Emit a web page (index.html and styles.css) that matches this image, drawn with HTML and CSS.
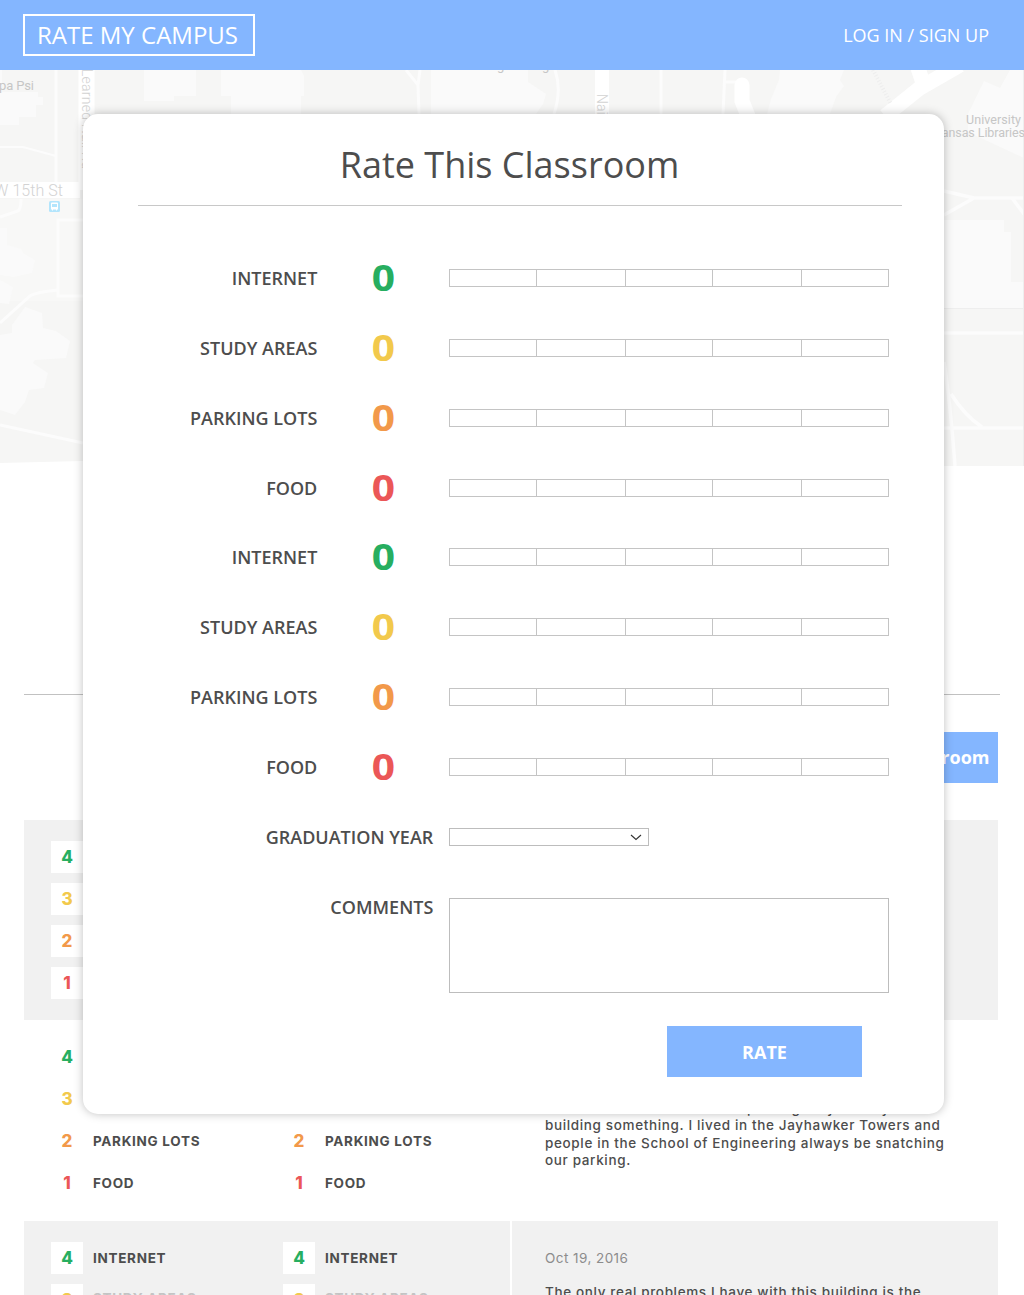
FILE: index.html
```html
<!DOCTYPE html>
<html lang="en">
<head>
<meta charset="utf-8">
<title>Rate My Campus</title>
<link rel="stylesheet" href="styles.css">
</head>
<body>
<header class="topbar">
  <a class="logo">RATE MY CAMPUS</a>
  <a class="login">LOG IN / SIGN UP</a>
</header>

<main class="page">
  <svg class="map" viewBox="0 70 1024 396" width="1024" height="396">
    <path class="ground" d="M0 70H1024V466H900V461H83L0 463Z"/>
    <g class="lawn">
      <path d="M0 199H83V301H0Z" opacity=".5"/>
      <path d="M0 70H2V92H38V97H43V105H36V117H19V125H0Z"/>
      <path d="M144 70H196V96H174V101H144ZM221 70H301L304 76V96H301V114H231V96H221Z"/>
      <path d="M431 70H528V82L546 94L543 104L536 114H431Z"/>
      <path d="M0 228H7V245L21 249L23 253L35 260L32 273L14 277L0 275ZM0 280L13 287L9 304L0 303ZM25 307L42 313L43 328L56 331L70 341L66 358L35 360L33 363L48 373L44 388L29 390L25 402L15 415L0 410V335L12 333L12 325Z"/>
      <path d="M780 70H844L840 80L844 86L836 97L830 114H767L771 99L779 80Z"/>
      <path d="M968 114L984 81L1000 88L1010 70H1024V158L968 132Z"/>
      <path d="M944 220H1004V232H1011V282H1024V308H944Z"/>
    </g>
    <g class="road">
      <path d="M56 70V182M0 217L18 211Q21 209 21 199M83 220H58V296H83M0 323L30 296Q36 292 59 290M0 425L83 443" />
      <path d="M0 147H23L56 156" stroke-width="2"/>
      <path d="M406 70L418 85L419 114M420 70L418 85M555 70Q562 90 554 114M661 70V114M725 70L723 114M726 82H738" stroke-width="3"/>
      <path d="M944 191L974 198H1024M944 215L974 198M1012 198L1024 214M944 333H1024M944 428H1024M944 362Q950 400 955 466M951 394Q965 416 982 427" stroke-width="3.5"/>
    </g>
    <path class="street" d="M0 190H80M86.500 70V190" stroke-width="16"/>
    <path class="street" d="M602 70V120" stroke-width="14"/>
    <path class="street" d="M742 85V101L748 116" stroke-width="15" stroke-linecap="round"/>
    <path class="street" d="M916 62L924 86M885 116L920 88L960 65" stroke-width="15"/>
    <path class="steps" d="M873 70L891 104"/>
    <path class="edge" d="M1023.500 70V466M944 308.500H1024"/>
    <g class="maptext">
      <text x="-1" y="89.500" font-size="13" textLength="35">pa Psi</text>
      <text x="-6" y="196" font-size="16" class="pale" textLength="69">W 15th St</text>
      <text transform="translate(81.500 69) rotate(90)" font-size="14" class="pale" textLength="100">Learned Hall Rd</text>
      <text transform="translate(597 94) rotate(90)" font-size="14" class="pale">Nai</text>
      <text x="966" y="123.500" font-size="12.500" textLength="55">University</text>
      <text x="934" y="136.500" font-size="12.500" textLength="91">Kansas Libraries</text>
      <text x="497" y="70" font-size="13">g</text>
      <text x="542" y="70" font-size="13">g</text>
    </g>
    <g class="bus">
      <rect x="49" y="201" width="11" height="11" rx="1.500"/>
      <path d="M51 203.500Q51 202.500 52 202.500H57Q58 202.500 58 203.500V209.500H57V210.500H56V209.500H53V210.500H52V209.500H51Z" fill="#fff"/>
      <path d="M52 204H57V207H52Z"/>
    </g>
  </svg>

  <hr class="rule">
  <a class="rate-link">Rate Classroom</a>

  <section class="reviews">
    <article class="review shaded">
      <div class="scores">
        <ul class="score-col">
          <li><b class="num green">4</b></li>
          <li><b class="num yellow">3</b></li>
          <li><b class="num orange">2</b></li>
          <li><b class="num red">1</b></li>
        </ul>
      </div>
      <div class="note"></div>
    </article>
    <article class="review">
      <div class="scores">
        <ul class="score-col">
          <li><b class="num green">4</b></li>
          <li><b class="num yellow">3</b></li>
          <li><b class="num orange">2</b><span>PARKING LOTS</span></li>
          <li><b class="num red">1</b><span>FOOD</span></li>
        </ul>
        <ul class="score-col">
          <li></li>
          <li></li>
          <li><b class="num orange">2</b><span>PARKING LOTS</span></li>
          <li><b class="num red">1</b><span>FOOD</span></li>
        </ul>
      </div>
      <div class="note">
        <p class="comment late"><span class="first">parking they usually</span><br>building something. I lived in the Jayhawker Towers and<br>people in the School of Engineering always be snatching<br>our parking.</p>
      </div>
    </article>
    <article class="review shaded">
      <div class="scores">
        <ul class="score-col">
          <li><b class="num green">4</b><span>INTERNET</span></li>
          <li><b class="num yellow">3</b><span class="faint">STUDY AREAS</span></li>
        </ul>
        <ul class="score-col">
          <li><b class="num green">4</b><span>INTERNET</span></li>
          <li><b class="num yellow">3</b><span class="faint">STUDY AREAS</span></li>
        </ul>
      </div>
      <div class="note">
        <time class="date">Oct 19, 2016</time>
        <p class="comment">The only real problems I have with this building is the</p>
      </div>
    </article>
  </section>
</main>

<form class="modal">
  <h1 class="title">Rate This Classroom</h1>
  <div class="field"><label>INTERNET</label><b class="value green">0</b><div class="bar"><i></i><i></i><i></i><i></i><i></i></div></div>
  <div class="field"><label>STUDY AREAS</label><b class="value yellow">0</b><div class="bar"><i></i><i></i><i></i><i></i><i></i></div></div>
  <div class="field"><label>PARKING LOTS</label><b class="value orange">0</b><div class="bar"><i></i><i></i><i></i><i></i><i></i></div></div>
  <div class="field"><label>FOOD</label><b class="value red">0</b><div class="bar"><i></i><i></i><i></i><i></i><i></i></div></div>
  <div class="field"><label>INTERNET</label><b class="value green">0</b><div class="bar"><i></i><i></i><i></i><i></i><i></i></div></div>
  <div class="field"><label>STUDY AREAS</label><b class="value yellow">0</b><div class="bar"><i></i><i></i><i></i><i></i><i></i></div></div>
  <div class="field"><label>PARKING LOTS</label><b class="value orange">0</b><div class="bar"><i></i><i></i><i></i><i></i><i></i></div></div>
  <div class="field"><label>FOOD</label><b class="value red">0</b><div class="bar"><i></i><i></i><i></i><i></i><i></i></div></div>
  <div class="field wide"><label>GRADUATION YEAR</label><div class="select"><svg width="12" height="8" viewBox="0 0 12 8"><path d="M1 2L6 6.500L11 2" fill="none" stroke="#333" stroke-width="1.100"/></svg></div></div>
  <div class="field wide comments"><label>COMMENTS</label><div class="area"></div></div>
  <button class="submit" type="button">RATE</button>
</form>
</body>
</html>
```
FILE: styles.css
```css
* { box-sizing: border-box; margin: 0; padding: 0; }
body {
  position: relative;
  width: 1024px;
  height: 1295px;
  overflow: hidden;
  background: #fff;
  color: #4d4d4d;
  font-family: "Open Sans", sans-serif;
}
.topbar {
  height: 70px;
  display: flex;
  align-items: center;
  justify-content: space-between;
  padding: 0 35px 0 23px;
  background: #84b6ff;
  color: #fff;
}
.logo {
  width: 232px;
  height: 42px;
  padding-right: 3px;
  border: 2px solid #fff;
  font-size: 24px;
  line-height: 37px;
  text-align: center;
  white-space: nowrap;
}
.login { font-size: 18px; white-space: nowrap; }

.page { height: 1225px; overflow: hidden; display: flex; flex-direction: column; }
.map { display: block; flex: none; }
.ground { fill: #f6f6f5; }
.lawn { fill: #fafafa; }
.road { fill: none; stroke: #fcfcfc; stroke-width: 3; }
.street { fill: none; stroke: #fff; }
.steps { fill: none; stroke: #ededed; stroke-width: 4; stroke-dasharray: 1 2; }
.edge { fill: none; stroke: #eeeeee; }
.maptext { font-family: Roboto, sans-serif; fill: #c6c6c6; }
.pale { fill: #d3d3d3; font-weight: 300; }
.bus { fill: #b3e5fc; }

.rule {
  flex: none;
  border: 0;
  border-top: 1px solid #c1c1c1;
  margin: 228px 24px 0;
}
.rate-link {
  flex: none;
  align-self: flex-end;
  width: 200px;
  height: 51px;
  margin: 37.400px 26px 0 0;
  padding-right: 8.500px;
  background: #84b6ff;
  color: #fff;
  font-size: 18px;
  font-weight: 700;
  line-height: 51px;
  text-align: right;
}
.reviews { flex: none; margin: 36.600px 26px 0 24px; font-family: Inter, sans-serif; }
.review {
  height: 200.300px;
  display: grid;
  grid-template-columns: 486px 486px;
  gap: 2px;
}
.shaded > div { background: #f1f1f1; }
.review:first-child { gap: 0; grid-template-columns: 486px 488px; }
.scores { display: flex; padding: 21px 0 0 27px; }
.score-col { flex: none; width: 232px; list-style: none; display: flex; flex-direction: column; gap: 10px; }
.score-col:last-child:not(:first-child) { width: 220px; }
.score-col li {
  height: 32px;
  display: flex;
  align-items: center;
  gap: 10px;
  font-size: 13.500px;
  font-weight: 700;
  letter-spacing: .7px;
}
.num { width: 32px; height: 32px; background: #fff; font-size: 17px; font-weight: 800; line-height: 32px; text-align: center; letter-spacing: 0; }
.faint { margin-top: -3px; color: #c4c4c4; }
.note { padding: 29px 0 0 33px; }
.date { display: block; font-size: 13.500px; line-height: 17px; letter-spacing: .44px; color: #8c8c8c; }
.comment { font-size: 13.500px; font-weight: 500; line-height: 17.200px; letter-spacing: .64px; white-space: nowrap; }
.date + .comment { margin-top: 17px; }
.late { padding-top: 51px; }
.first { margin-left: 202px; }

.green { color: #27ae60; }
.yellow { color: #f2c94c; }
.orange { color: #f2994a; }
.red { color: #eb5757; }

.modal {
  position: absolute;
  left: 83px;
  top: 114px;
  width: 861px;
  height: 1000px;
  padding: 0 42px 0 55px;
  border-radius: 15px;
  background: #fff;
  box-shadow: 0 0 10px rgba(0, 0, 0, .25);
  display: flex;
  flex-direction: column;
}
.title {
  height: 92px;
  margin-bottom: 37.900px;
  padding-right: 21px;
  border-bottom: 1px solid #c8c8c8;
  font-size: 36px;
  font-weight: 400;
  line-height: 102px;
  text-align: center;
}
.field {
  flex: none;
  height: 69.900px;
  display: grid;
  grid-template-columns: 180px 131px 440px;
  align-items: center;
  padding-bottom: 2px;
}
.field label { padding-right: .700px; font-size: 18px; font-weight: 600; text-align: right; white-space: nowrap; }
.value { font-size: 36px; line-height: 36px; text-align: center; transform: scaleX(1.13); }
.bar { height: 18px; border: 1px solid #c4c4c4; display: grid; grid-template-columns: 87px 89px 87px 89px 1fr; }
.bar i { border-right: 1px solid #c4c4c4; }
.bar i:last-child { border: 0; }
.wide { grid-template-columns: 296px 440px; column-gap: 15px; }
.select {
  width: 200px;
  height: 18px;
  border: 1px solid #bdbdbd;
  display: flex;
  align-items: center;
  justify-content: flex-end;
  padding-right: 6px;
}
.comments { height: 148px; align-items: start; padding-top: 22px; }
.area { height: 95px; margin-top: 3px; border: 1px solid #bdbdbd; }
.submit {
  flex: none;
  align-self: flex-end;
  width: 195px;
  height: 51px;
  margin-right: 40px;
  margin-top: 5.500px;
  border: 0;
  background: #84b6ff;
  color: #fff;
  font: 700 18px "Open Sans", sans-serif;
}
```
